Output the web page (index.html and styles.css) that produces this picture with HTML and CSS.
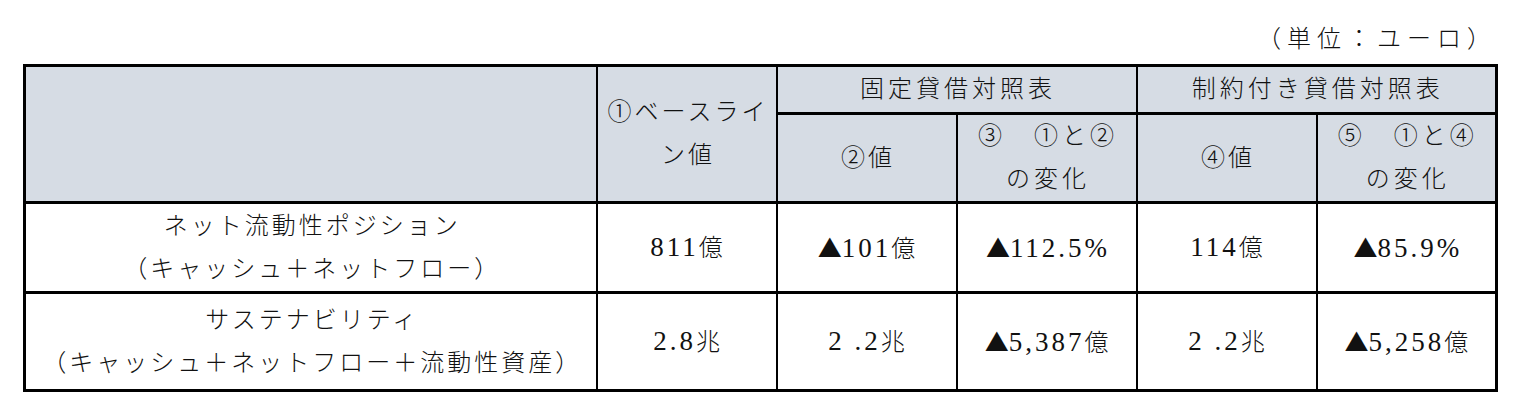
FILE: index.html
```html
<!DOCTYPE html>
<html lang="ja">
<head>
<meta charset="utf-8">
<title>流動性比較表</title>
<link rel="stylesheet" href="styles.css">
</head>
<body>
<div class="page">
  <div class="unit">（単位：ユーロ）</div>
  <table class="grid">
    <colgroup>
      <col class="c-label">
      <col class="c-val">
      <col class="c-val">
      <col class="c-val">
      <col class="c-val">
      <col class="c-val">
    </colgroup>
    <thead>
      <tr class="h1">
        <th rowspan="2"></th>
        <th rowspan="2">①ベースライ<br>ン値</th>
        <th colspan="2" class="grp">固定貸借対照表</th>
        <th colspan="2" class="grp">制約付き貸借対照表</th>
      </tr>
      <tr class="h2">
        <th>②値</th>
        <th class="wide">③　①と②<br>の変化</th>
        <th>④値</th>
        <th class="wide">⑤　①と④<br>の変化</th>
      </tr>
    </thead>
    <tbody>
      <tr class="r1">
        <td>ネット流動性ポジション<br>（キャッシュ＋ネットフロー）</td>
        <td><span class="num">811</span>億</td>
        <td><span class="tri">▲</span><span class="num">101</span>億</td>
        <td><span class="tri">▲</span><span class="num">112.5%</span></td>
        <td><span class="num">114</span>億</td>
        <td><span class="tri">▲</span><span class="num">85.9%</span></td>
      </tr>
      <tr class="r2">
        <td>サステナビリティ<br>（キャッシュ＋ネットフロー＋流動性資産）</td>
        <td><span class="num">2.8</span>兆</td>
        <td><span class="num">2 .2</span>兆</td>
        <td><span class="tri">▲</span><span class="num">5,387</span>億</td>
        <td><span class="num">2 .2</span>兆</td>
        <td><span class="tri">▲</span><span class="num">5,258</span>億</td>
      </tr>
    </tbody>
  </table>
</div>
</body>
</html>
```
FILE: styles.css
```css
body {
  margin: 0;
  background: #ffffff;
  color: #111111;
  font-family: "Liberation Serif", "Noto Sans CJK JP", serif;
  font-weight: 300;
}

.page {
  padding: 18px 0 0 23px;
  width: 1474px;
}

.unit {
  text-align: right;
  font-size: 24px;
  line-height: 43px;
  height: 43px;
  letter-spacing: 6px;
}

.grid {
  margin-top: 3px;
  border-collapse: collapse;
  table-layout: fixed;
  width: 1474px;
  border: 3px solid #000;
}

.c-label { width: 572px; }
.c-val { width: 180px; }

.grid th,
.grid td {
  border-left: 2px solid #000;
  border-right: 2px solid #000;
  border-top: 3px solid #000;
  border-bottom: 3px solid #000;
  padding: 0 0 0 3px;
  text-align: center;
  vertical-align: middle;
  font-size: 24px;
  line-height: 43px;
  letter-spacing: 3px;
  font-weight: 300;
  white-space: nowrap;
}

.grid thead th {
  background: #d6dce4;
}

.grid th.grp {
  letter-spacing: 4px;
}

.grid th.wide {
  letter-spacing: 4px;
}

.num {
  font-family: "Liberation Serif", serif;
  font-size: 27px;
  font-weight: 400;
  letter-spacing: 3px;
}

.tri {
  font-family: "Noto Sans CJK JP", sans-serif;
  font-size: 24px;
  font-weight: 400;
  letter-spacing: 0;
}

.h1 { height: 48px; }
.h2 { height: 88px; }
.r1 { height: 90px; }
.r2 { height: 98px; }
```
